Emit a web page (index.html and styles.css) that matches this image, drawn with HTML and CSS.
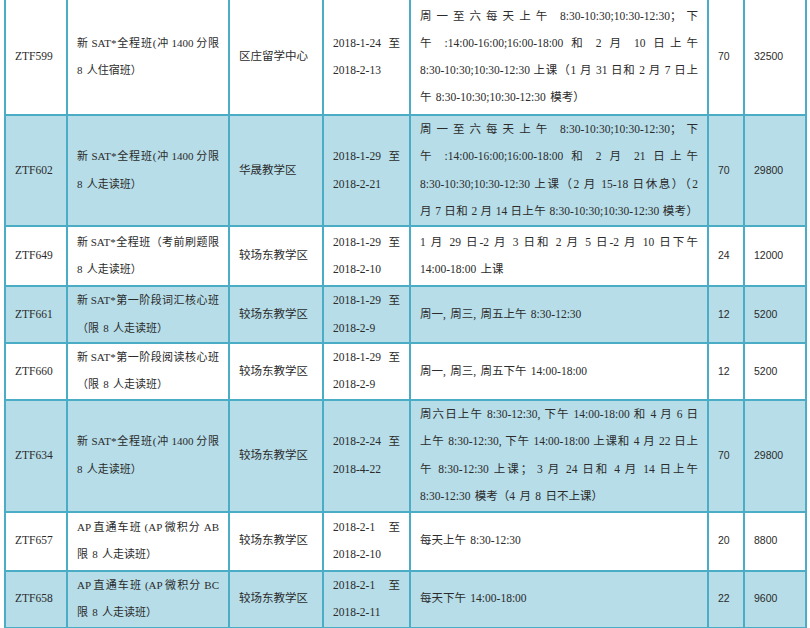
FILE: index.html
```html
<!DOCTYPE html>
<html lang="zh-CN">
<head>
<meta charset="utf-8">
<title>课程安排</title>
<link rel="stylesheet" href="styles.css">
</head>
<body>
<table class="schedule">
  <colgroup>
    <col class="w-id"><col class="w-name"><col class="w-place"><col class="w-date"><col class="w-time"><col class="w-hours"><col class="w-fee">
  </colgroup>
  <tbody>
    <tr class="row-a">
      <td class="id">ZTF599</td>
      <td class="name"><span class="ln">新 SAT*全程班(冲 1400 分限</span>8 人住宿班）</td>
      <td>区庄留学中心</td>
      <td><span class="ln">2018-1-24 至</span>2018-2-13</td>
      <td><span class="ln">周一至六每天上午 8:30-10:30;10:30-12:30；下</span><span class="ln">午 :14:00-16:00;16:00-18:00 和 2 月 10 日上午</span><span class="ln">8:30-10:30;10:30-12:30 上课（1 月 31 日和 2 月 7 日上</span>午 8:30-10:30;10:30-12:30 模考）</td>
      <td class="num">70</td>
      <td class="num">32500</td>
    </tr>
    <tr class="shade row-b">
      <td class="id">ZTF602</td>
      <td class="name"><span class="ln">新 SAT*全程班(冲 1400 分限</span>8 人走读班）</td>
      <td>华晟教学区</td>
      <td><span class="ln">2018-1-29 至</span>2018-2-21</td>
      <td><span class="ln">周一至六每天上午 8:30-10:30;10:30-12:30；下</span><span class="ln">午 :14:00-16:00;16:00-18:00 和 2 月 21 日上午</span><span class="ln">8:30-10:30;10:30-12:30 上课（2 月 15-18 日休息）（2</span><span class="ln">月 7 日和 2 月 14 日上午 8:30-10:30;10:30-12:30 模考）</span></td>
      <td class="num">70</td>
      <td class="num">29800</td>
    </tr>
    <tr class="row-c">
      <td class="id">ZTF649</td>
      <td class="name"><span class="ln">新 SAT*全程班（考前刷题限</span>8 人走读班）</td>
      <td>较场东教学区</td>
      <td><span class="ln">2018-1-29 至</span>2018-2-10</td>
      <td><span class="ln">1 月 29 日-2 月 3 日和 2 月 5 日-2 月 10 日下午</span>14:00-18:00 上课</td>
      <td class="num">24</td>
      <td class="num">12000</td>
    </tr>
    <tr class="shade row-d">
      <td class="id">ZTF661</td>
      <td class="name"><span class="ln">新 SAT*第一阶段词汇核心班</span>（限 8 人走读班）</td>
      <td>较场东教学区</td>
      <td><span class="ln">2018-1-29 至</span>2018-2-9</td>
      <td>周一, 周三, 周五上午 8:30-12:30</td>
      <td class="num">12</td>
      <td class="num">5200</td>
    </tr>
    <tr class="row-e">
      <td class="id">ZTF660</td>
      <td class="name"><span class="ln">新 SAT*第一阶段阅读核心班</span>（限 8 人走读班）</td>
      <td>较场东教学区</td>
      <td><span class="ln">2018-1-29 至</span>2018-2-9</td>
      <td>周一, 周三, 周五下午 14:00-18:00</td>
      <td class="num">12</td>
      <td class="num">5200</td>
    </tr>
    <tr class="shade row-f">
      <td class="id">ZTF634</td>
      <td class="name"><span class="ln">新 SAT*全程班(冲 1400 分限</span>8 人走读班）</td>
      <td>较场东教学区</td>
      <td><span class="ln">2018-2-24 至</span>2018-4-22</td>
      <td><span class="ln">周六日上午 8:30-12:30, 下午 14:00-18:00 和 4 月 6 日</span><span class="ln">上午 8:30-12:30, 下午 14:00-18:00 上课和 4 月 22 日上</span><span class="ln">午 8:30-12:30 上课； 3 月 24 日和 4 月 14 日上午</span>8:30-12:30 模考（4 月 8 日不上课）</td>
      <td class="num">70</td>
      <td class="num">29800</td>
    </tr>
    <tr class="row-g">
      <td class="id">ZTF657</td>
      <td class="name"><span class="ln">AP 直通车班 (AP 微积分 AB</span>限 8 人走读班）</td>
      <td>较场东教学区</td>
      <td><span class="ln">2018-2-1 至</span>2018-2-10</td>
      <td>每天上午 8:30-12:30</td>
      <td class="num">20</td>
      <td class="num">8800</td>
    </tr>
    <tr class="shade row-h">
      <td class="id">ZTF658</td>
      <td class="name"><span class="ln">AP 直通车班 (AP 微积分 BC</span>限 8 人走读班）</td>
      <td>较场东教学区</td>
      <td><span class="ln">2018-2-1 至</span>2018-2-11</td>
      <td>每天下午 14:00-18:00</td>
      <td class="num">22</td>
      <td class="num">9600</td>
    </tr>
  </tbody>
</table>
</body>
</html>
```

FILE: styles.css
```css
html, body {
  margin: 0;
  padding: 0;
  background: #ffffff;
}

.schedule {
  margin: 0 0 0 4px;
  width: 803px;
  table-layout: fixed;
  border-collapse: separate;
  border-spacing: 0;
  border-left: 2px solid #4bacc6;
  font-family: "Liberation Serif", "Noto Sans CJK SC", serif;
  font-size: 11.5px;
  line-height: 27.25px;
  word-spacing: 1.5px;
  color: #2b2b2b;
}

.w-id { width: 62px; }
.w-name { width: 162px; }
.w-place { width: 94px; }
.w-date { width: 87px; }
.w-time { width: 298px; }
.w-hours { width: 36px; }
.w-fee { width: 62px; }

.schedule td {
  box-sizing: border-box;
  padding: 0 9px;
  border-right: 2px solid #4bacc6;
  border-bottom: 2px solid #4bacc6;
  vertical-align: middle;
  text-align: justify;
}

.schedule .shade td {
  background: #b6dde8;
}

.ln {
  display: block;
  text-align: justify;
  text-align-last: justify;
  word-spacing: 0;
}

.schedule td.name {
  font-size: 11px;
}

.schedule td.name .ln {
  word-spacing: -1px;
}

.schedule td.num {
  font-family: "Liberation Sans", "Noto Sans CJK SC", sans-serif;
  font-size: 10.5px;
  word-spacing: normal;
  text-align: left;
}

.row-a { height: 116px; }
.row-b { height: 111px; }
.row-c { height: 60px; }
.row-d { height: 57px; }
.row-e { height: 56px; }
.row-f { height: 112px; }
.row-g { height: 59px; }
.row-h { height: 57px; }
```
